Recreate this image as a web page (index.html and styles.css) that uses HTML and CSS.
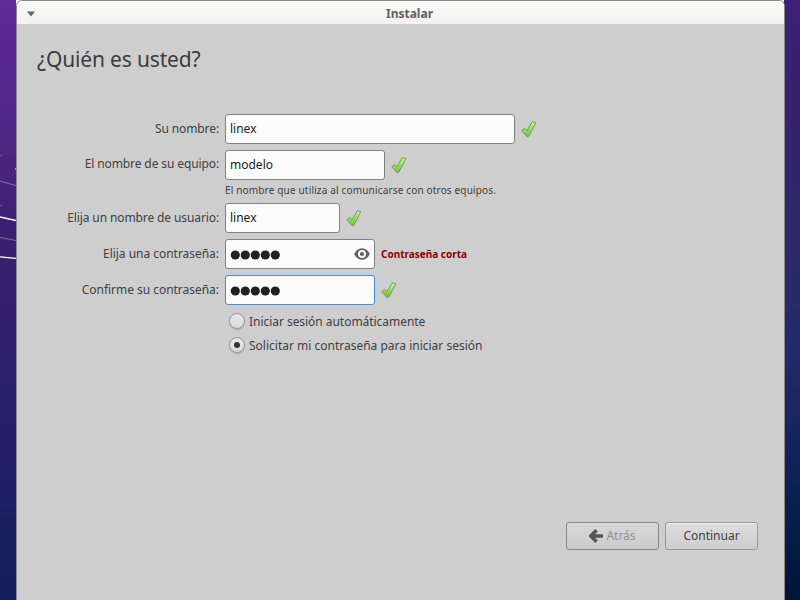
FILE: index.html
```html
<!DOCTYPE html>
<html lang="es">
<head>
<meta charset="utf-8">
<title>Instalar</title>
<link rel="stylesheet" href="styles.css">
</head>
<body>
<svg class="defs" width="0" height="0" aria-hidden="true">
  <defs>
    <linearGradient id="leaf" x1="0" y1="0" x2="0" y2="1"><stop offset="0" stop-color="#cdf598"/><stop offset="1" stop-color="#6cc322"/></linearGradient>
    <symbol id="check" viewBox="0 0 16 17">
      <path d="M.8 9.600 3.500 7.600l2.500 2L11.300 .8l3.500.8L8 15l-1.800.8z" fill="url(#leaf)" stroke="#6a9f58" stroke-linejoin="round"/>
    </symbol>
    <symbol id="dots" viewBox="0 0 50 10">
      <g fill="#212121"><circle cx="5.300" cy="5" r="4.600"/><circle cx="15.300" cy="5" r="4.600"/><circle cx="25.300" cy="5" r="4.600"/><circle cx="35.300" cy="5" r="4.600"/><circle cx="45.300" cy="5" r="4.600"/></g>
    </symbol>
  </defs>
</svg>
<div class="desktop">
  <svg class="streaks" width="16" height="600" viewBox="0 0 16 600" fill="none" stroke="#fff">
    <path d="M0 155l2 1M0 205.500h2" stroke-opacity=".25"/>
    <path d="M0 181l16 4.500" stroke-opacity=".35"/>
    <path d="M0 217l16 3.500" stroke-width="1.300"/>
    <path d="M0 237.500l16 3" stroke-opacity=".35"/>
    <path d="M0 256.800l16 1.500" stroke-width="1.300"/>
    <path d="M15.500 168v2" stroke-opacity=".5"/>
  </svg>
  <main class="window">
    <header class="titlebar">
      <svg class="menu-arrow" width="8" height="6" viewBox="0 0 8 6"><path d="M0 .5h8L4 5.500z" fill="#666"/></svg>
      <span class="title">Instalar</span>
    </header>
    <h1>¿Quién es usted?</h1>
    <form class="form">
      <div class="row">
        <label>Su nombre:</label>
        <div class="entry full">linex</div>
        <svg class="check"><use href="#check"/></svg>
      </div>
      <div class="row">
        <label class="raised">El nombre de su equipo:</label>
        <div class="entry host">modelo</div>
        <svg class="check"><use href="#check"/></svg>
      </div>
      <p class="hint"><span>El nombre que utiliza al comunicarse con otros equipos.</span></p>
      <div class="row">
        <label>Elija un nombre de usuario:</label>
        <div class="entry user">linex</div>
        <svg class="check"><use href="#check"/></svg>
      </div>
      <div class="row">
        <label class="slight">Elija una contraseña:</label>
        <div class="entry pass">
          <svg class="dots"><use href="#dots"/></svg>
          <svg class="eye" width="16" height="14" viewBox="0 0 16 14"><path d="M.2 7C2 3.300 4.800 1.200 8 1.200S14 3.300 15.800 7C14 10.700 11.200 12.800 8 12.800S2 10.700.2 7z" fill="#606060"/><circle cx="8" cy="7" r="4" fill="#fcfcfc"/><circle cx="8" cy="7" r="2.100" fill="#606060"/></svg>
        </div>
        <strong class="warning">Contraseña corta</strong>
      </div>
      <div class="row">
        <label class="slight">Confirme su contraseña:</label>
        <div class="entry pass focused"><svg class="dots"><use href="#dots"/></svg></div>
        <svg class="check"><use href="#check"/></svg>
      </div>
      <div class="options">
        <div class="option"><span class="radio"></span><span class="auto">Iniciar sesión automáticamente</span></div>
        <div class="option"><span class="radio selected"></span><span class="ask">Solicitar mi contraseña para iniciar sesión</span></div>
      </div>
    </form>
    <footer class="actions">
      <div class="button disabled">
        <svg width="14" height="14" viewBox="0 0 14 14"><path d="M7.500 1.300 1.900 7l5.600 5.700M2.500 7H14" fill="none" stroke="#555" stroke-width="3.600"/></svg>
        <span>Atrás</span>
      </div>
      <div class="button"><span>Continuar</span></div>
    </footer>
  </main>
</div>
</body>
</html>
```
FILE: styles.css
```css
* { box-sizing: border-box; }
body {
  margin: 0;
  font: 12px/16px "Noto Sans", sans-serif;
  color: #3f3f3f;
}
.defs { position: absolute; }
.desktop {
  position: relative;
  width: 800px;
  height: 600px;
  padding: 0 15px 0 16px;
  overflow: hidden;
  background:
    linear-gradient(180deg, #3e207c, #36206f 15%, #2d2a6c 40%, #20296a 60%, #12245c 75%, #041a43 92%, #011439) right / 16px 100% no-repeat,
    linear-gradient(180deg, #5e2b98, #52278a 18%, #3b206f 40%, #2d1f6b 58%, #211f66 80%, #101f5a) left / 16px 100% no-repeat;
}
.streaks { position: absolute; left: 0; top: 0; }
.window {
  display: flex;
  flex-direction: column;
  height: 601px;
  background: #cecece;
  border: 1px solid #8a8a8a;
  border-bottom: 0;
  border-radius: 6px 6px 0 0;
  overflow: hidden;
}
.titlebar {
  display: flex;
  align-items: center;
  flex: 0 0 23px;
  padding: 2px 0 0 10px;
  background: linear-gradient(#fff, #f9f9f8 2px, #f3f2f1);
}
.title {
  flex: 1;
  text-align: center;
  font-weight: 700;
  color: #606060;
}
h1 {
  margin: 19px 0 0 20px;
  font-size: 21px;
  line-height: 32px;
  font-weight: 400;
  letter-spacing: -.16px;
  color: #3c3c3c;
}
.form { display: flex; flex-direction: column; margin-top: 39px; }
.row { display: flex; align-items: center; height: 30px; margin-bottom: 6px; }
label {
  width: 202px;
  margin-right: 6px;
  text-align: right;
  white-space: nowrap;
  letter-spacing: -.11px;
}
.slight { letter-spacing: -.03px; }
.raised { padding-bottom: 2px; }
.entry {
  display: flex;
  align-items: center;
  justify-content: space-between;
  height: 30px;
  padding: 0 4px;
  border: 1px solid #808080;
  border-radius: 3px;
  background: #fcfcfc;
  color: #212121;
}
.full { width: 290px; }
.host { width: 160px; }
.user { width: 115px; }
.pass { width: 150px; }
.focused { border-color: #398ee7; }
.check { width: 16px; height: 17px; margin-left: 6px; }
.hint {
  height: 17px;
  margin: -3px 0 3px 208px;
  font-size: 10px;
  line-height: 14px;
  letter-spacing: .165px;
}
.dots { width: 50px; height: 10px; margin-top: 1px; }
.warning { margin-left: 6px; font-size: 10px; color: #8b0000; }
.options { padding: 1px 0 0 212px; }
.option { display: flex; align-items: center; height: 24px; gap: 4px; margin-top: -2px; margin-bottom: 2px; }
.auto { letter-spacing: -.04px; }
.radio {
  display: flex;
  width: 16px;
  height: 16px;
  margin-bottom: 2px;
  border: 1px solid #989898;
  border-radius: 50%;
  background: linear-gradient(#e9e9e9, #d8d8d8);
  box-shadow: 0 1px 1px #aaa;
}
.selected { align-items: center; justify-content: center; }
.selected::after { content: ""; width: 6px; height: 6px; border-radius: 50%; background: #333; }
.actions { display: flex; justify-content: flex-end; gap: 6px; margin: auto 26px 51px 0; }
.button {
  display: flex;
  align-items: center;
  justify-content: center;
  gap: 3px;
  width: 93px;
  height: 28px;
  border: 1px solid #999;
  border-radius: 3px;
  background: linear-gradient(#dedede, #cdcdcd);
  box-shadow: inset 0 1px #eee;
}
.disabled { color: #909090; border-color: #868686; box-shadow: none; background: linear-gradient(#d8d8d8, #cbcbcb); }
```
